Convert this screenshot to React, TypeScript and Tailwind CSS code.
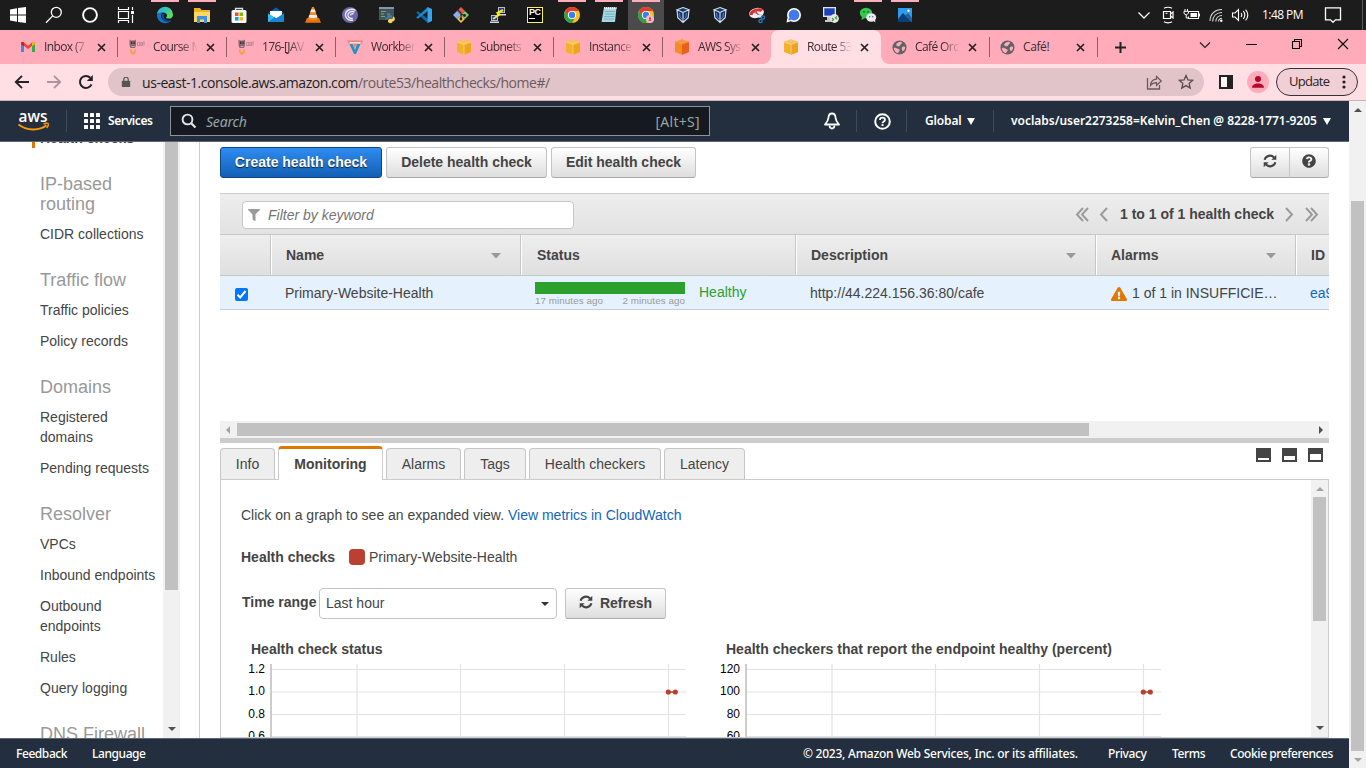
import React from "react";
import { FaFilter, FaQuestionCircle, FaExclamationTriangle } from "react-icons/fa";

type Kids = { children?: React.ReactNode };

const I = ({ children, size = 18, vb = 18 }: Kids & { size?: number; vb?: number }) => (
  <svg width={size} height={size} viewBox={`0 0 ${vb} ${vb}`} fill="none" className="block shrink-0">
    {children}
  </svg>
);

/* ---------- taskbar icons ---------- */

const Windows = () => (
  <I>
    <path d="M1 3.400 8 2.300v6.200H1zM9 2.100 17 1v7.500H9zM1 9.500h7v6.200l-7-1.100zM9 9.500h8V17l-8-1.100z" fill="#fff" />
  </I>
);
const SearchThin = () => (
  <I>
    <circle cx="11.300" cy="6.300" r="5" stroke="#fff" strokeWidth="1.300" />
    <path d="M7.700 9.900 1 16.800" stroke="#fff" strokeWidth="1.300" />
  </I>
);
const Ring = () => (
  <I>
    <circle cx="9" cy="9" r="6.900" stroke="#fff" strokeWidth="1.900" />
  </I>
);
const TaskView = () => (
  <I>
    <path d="M1.500 1v2.500h10V1M1.500 17v-2.500h10V17M1.500 5.500h10v7h-10zM15.500 1v3M15.500 9v8" stroke="#fff" strokeWidth="1.200" />
    <path d="M14 5h3v3h-3z" fill="#fff" />
  </I>
);
const Edge = () => (
  <I>
    <defs>
      <linearGradient id="eg" x1="0" y1="0" x2="1" y2="0.500">
        <stop offset="0" stopColor="#2fa6e6" />
        <stop offset="0.600" stopColor="#35c7b5" />
        <stop offset="1" stopColor="#63dd5b" />
      </linearGradient>
    </defs>
    <path d="M1 9a8 8 0 0 1 16-.6c0 3-2.300 4.200-4.600 4.200-1.500 0-2.300-.4-2.300-1 0-.5.900-.8.900-2.200 0-1.600-1.500-3-4-3C4.500 6.400 1.700 7.200 1 9z" fill="url(#eg)" />
    <path d="M1 9c.8-1.900 3.400-2.700 5.600-2.500C4.600 8 4.600 11 6 13c2 2.700 6 3.400 9.600 1C14.200 16 12 17.200 9.200 17.200 4.500 17.200.8 13.500 1 9z" fill="#1473c8" />
    <path d="M6.500 8c-2 3 0 7.500 4.300 8.200 2 .3 3.800-.7 4.800-2.200-2.200 1-5.600.6-7-1.400-1-1.400-1.200-3 .1-4.200-.6-.4-1.500-.6-2.200-.4z" fill="#0d4b96" />
  </I>
);
const Folder = () => (
  <I>
    <path d="M1 2h6l1.500 2H17v12H1z" fill="#f0b429" />
    <path d="M1 6h16v10H1z" fill="#ffd766" />
    <path d="M4 10h10v7h-3v-3.500H7V17H4z" fill="#3c93dd" />
  </I>
);
const Store = () => (
  <I>
    <path d="M5.500 5V2.500h7V5" stroke="#d8dfe6" strokeWidth="1.300" />
    <rect x="1.500" y="4" width="15" height="13" rx="1.500" fill="#f5f6f8" />
    <path d="M5 6.500h3.500V10H5z" fill="#f25022" />
    <path d="M9.500 6.500H13V10H9.500z" fill="#7fba00" />
    <path d="M5 11h3.500v3.500H5z" fill="#00a4ef" />
    <path d="M9.500 11H13v3.500H9.500z" fill="#ffb900" />
  </I>
);
const Mail = () => (
  <I>
    <path d="M1 7 9 1.500 17 7z" fill="#0a5fb4" />
    <path d="M3 5h12v5l-6 3-6-3z" fill="#fff" />
    <path d="M1 7.500V16h16V7.500l-8 5z" fill="#2aa7ea" />
    <path d="M1 16l6.500-5.500L9 12.500l8-5V16z" fill="#1685d6" />
    <path d="M1 7.500V16l6.500-4.600z" fill="#39b6f3" />
  </I>
);
const Vlc = () => (
  <I>
    <path d="M3 12h12l2 4.800H1z" fill="#e8740c" />
    <path d="M8 1h2l4 12c-2 1.500-8 1.500-10 0z" fill="#f58a1f" />
    <path d="M7.200 3.600h3.600l.9 2.700H6.300zM5.400 9h7.200l.8 2.300c-2 1-6.800 1-8.800 0z" fill="#e9edf0" />
  </I>
);
const BitTorrent = () => (
  <I>
    <circle cx="9" cy="9" r="8" fill="#6e66a8" />
    <path d="M14.500 4.500C10 1.500 4 4.500 4.500 9.500c.4 3.500 4 5.500 7.500 4.500M13.500 6C10 4.500 6.500 6.500 7 9.700c.4 2.100 2.600 3.100 4.600 2.500M12.500 8c-1.600-.6-3 .2-3 1.500" stroke="#eceaf6" strokeWidth="1.400" />
  </I>
);
const PyScript = () => (
  <I>
    <path d="M1 1h15v13H1z" fill="#45525e" />
    <path d="M1 1h15v2H1z" fill="#7d97ad" />
    <path d="M3 5.500h5M3 8h3M9 8h3M3 10.500h4" stroke="#59b765" strokeWidth="1.200" />
    <path d="M9 11c0-3 5-3 5-.5v2H10c-1.500 0-2 1-2 2C6.500 13.500 7 11.500 9 11z" fill="#3c78aa" />
    <path d="M15 10.500c2.500 0 2.500 5-.5 5 0 2.500-5 2-4.500-.5 0-1.500 1-2 2-2h2.500z" fill="#f8d549" />
  </I>
);
const VsCode = () => (
  <I>
    <path d="M12.500 17 1.200 6.400l1.600-1.200L13 13z" fill="#0b68ab" />
    <path d="M13 1 1.200 11.600l1.600 1.200L13 5z" fill="#1b87cf" />
    <path d="M12.500 1 17 3v12l-4.500 2z" fill="#35a6ee" />
  </I>
);
const GitIcon = () => (
  <I>
    <path d="M9 1l4 4-4 4-4-4z" fill="#e9594b" />
    <path d="M5 5l4 4-4 4-4-4z" fill="#8ab0ee" />
    <path d="M13 5l4 4-4 4-4-4z" fill="#7cc576" />
    <path d="M9 9l4 4-4 4-4-4z" fill="#f0c24b" />
    <path d="M6 4l3 3v6M9 8l3 1.500" stroke="#2b2b2b" strokeWidth="1.200" />
    <circle cx="12.500" cy="9.500" r="1.400" fill="#222" />
    <circle cx="9" cy="13" r="1.400" fill="#222" />
  </I>
);
const Putty = () => (
  <I>
    <path d="M9 1h7v6H9zM2 9h7v6H2z" fill="#b8bdc4" />
    <path d="M10 2h5v4h-5zM3 10h5v4H3z" fill="#2136a8" />
    <path d="M8 8h9v1.500H8zM1 15.500h9V17H1z" fill="#d5d8dc" />
    <path d="M14 4 8.500 7l2 1.500L4 13" stroke="#f5ec1c" strokeWidth="2" />
  </I>
);
const PyCharm = () => (
  <span className="flex h-4 w-4 flex-col border border-[#f4f35a] bg-black pl-[1px] font-['Liberation_Sans'] text-[9px] leading-[9px] font-bold tracking-[-0.500px] text-white">
    PC
    <span className="mt-[1px] block h-px w-[6px] bg-white" />
  </span>
);
const Chrome = ({ badge = false }: { badge?: boolean }) => (
  <I>
    <circle cx="9" cy="9" r="8" fill="#fbc116" />
    <path d="M2.070 5A8 8 0 0 1 15.930 5H9a4 4 0 0 0-3.500 6z" fill="#e33b2e" />
    <path d="M2.070 5A8 8 0 0 0 9 17l3.500-6a4 4 0 0 1-7 0z" fill="#2da14c" />
    <circle cx="9" cy="9" r="4.100" fill="#fff" />
    <circle cx="9" cy="9" r="3.200" fill="#3b7ded" />
    {badge && (
      <>
        <circle cx="13" cy="13" r="4" fill="#f9b9c2" />
        <circle cx="13" cy="12.200" r="1" fill="#c2234a" />
        <path d="M11.500 14.800c0-1.700 3-1.700 3 0z" fill="#c2234a" />
      </>
    )}
  </I>
);
const Notepad = () => (
  <I>
    <path d="M4 1.500h12.500L15 16H1.500z" fill="#a9d6e3" />
    <path d="M5 5.500h10M4.700 8h10M4.300 10.500h10M4 13h10" stroke="#6aa6b8" strokeWidth="0.800" />
    <path d="M4 2h12.500" stroke="#e9eef0" strokeWidth="2" strokeDasharray="1.200 0.800" />
  </I>
);
const VBox = () => (
  <I>
    <path d="M9 1l6.500 2.500-.8 8.500L9 17l-5.700-5L2.500 3.500z" fill="#17366a" />
    <path d="M9 1.500l6 2.200L9 6.500 3 3.700zM9 6.500v10M3 3.700l.8 8L9 16.500l5.200-4.800.8-8" stroke="#d5e0ee" strokeWidth="1.100" />
    <path d="M5.500 7l.5 4 3 3M12.500 7l-.5 4-3 3" stroke="#5f7fae" strokeWidth="1" />
  </I>
);
const Snip = () => (
  <I>
    <ellipse cx="8.500" cy="7" rx="7.500" ry="5" transform="rotate(-14 8.500 7)" fill="#eceef1" />
    <path d="M1.500 9C.5 4 11 0 15.500 3.500l-3 2.500C9 4 5.500 6 4.500 9z" fill="#d8332f" />
    <path d="M6 6l6 3M8 5l1.500 3.500" stroke="#b33" strokeWidth="0.900" />
    <path d="M11 9.500l3.500-1.500M12 8v4" stroke="#d8dde2" strokeWidth="1.300" />
    <circle cx="15" cy="11.500" r="1.600" stroke="#2878c7" strokeWidth="1.400" />
    <circle cx="12.500" cy="15" r="1.600" stroke="#2878c7" strokeWidth="1.400" />
  </I>
);
const Signal = () => (
  <I>
    <circle cx="9" cy="9" r="7" fill="#fff" />
    <path d="M1.500 16.500 2.300 12l3.500 3.300z" fill="#fff" />
    <circle cx="9" cy="9" r="5.400" fill="#4478f0" />
    <path d="M3.500 14.500 4 11.500l2.500 2z" fill="#4478f0" />
  </I>
);
const Remote = () => (
  <I>
    <path d="M1 1h13v10H1z" fill="#dfe3e8" />
    <path d="M2.300 2.300h10.400v7.300H2.300z" fill="#1d42b8" />
    <path d="M5 11h5v3H5zM3 14h8v2H3z" fill="#c3c8ce" />
    <circle cx="12.500" cy="12.500" r="4.400" fill="#e6e8ea" />
    <path d="M10 12l1.600 1.500-1.600 1.500M15 10.300l-1.600 1.500 1.600 1.500" stroke="#4aa038" strokeWidth="1.200" />
  </I>
);
const Wechat = () => (
  <I>
    <ellipse cx="7" cy="7" rx="6.200" ry="5.200" fill="#36c74e" />
    <path d="M3 10.500 2.500 14 6 12z" fill="#36c74e" />
    <circle cx="5" cy="5.800" r="0.900" fill="#14662a" />
    <circle cx="9" cy="5.800" r="0.900" fill="#14662a" />
    <ellipse cx="12.200" cy="11.500" rx="5" ry="4.200" fill="#e9ecee" />
    <path d="M14 14.500l2.300 2-.2-3z" fill="#e9ecee" />
    <circle cx="10.700" cy="10.700" r="0.700" fill="#666" />
    <circle cx="13.800" cy="10.700" r="0.700" fill="#666" />
  </I>
);
const Photos = () => (
  <I>
    <path d="M2 2h14v14H2z" fill="#2f9bea" />
    <path d="M2 13l5-6 9 9H2z" fill="#0c3f78" />
    <path d="M9 10l3-3 4 5v4z" fill="#1d62ab" />
    <circle cx="12.500" cy="4.800" r="1.200" fill="#fff" />
  </I>
);

const apps: { icon: React.ReactNode; open?: boolean; active?: boolean }[] = [
  { icon: <Edge />, open: true },
  { icon: <Folder />, open: true },
  { icon: <Store /> },
  { icon: <Mail /> },
  { icon: <Vlc /> },
  { icon: <BitTorrent /> },
  { icon: <PyScript /> },
  { icon: <VsCode /> },
  { icon: <GitIcon /> },
  { icon: <Putty /> },
  { icon: <PyCharm /> },
  { icon: <Chrome />, open: true },
  { icon: <Notepad />, open: true },
  { icon: <Chrome badge />, open: true, active: true },
  { icon: <VBox /> },
  { icon: <VBox /> },
  { icon: <Snip /> },
  { icon: <Signal /> },
  { icon: <Remote /> },
  { icon: <Wechat />, open: true },
  { icon: <Photos />, open: true },
];

function Taskbar() {
  return (
    <div className="flex h-[30px] shrink-0 bg-[#1c1c1c]">
      <div className="flex w-[147px]">
        {[<Windows />, <SearchThin />, <Ring />, <TaskView />].map((icon, i) => (
          <div key={i} className="flex w-9 items-center justify-center">{icon}</div>
        ))}
      </div>
      {apps.map((a, i) => (
        <div key={i} className={a.active ? "mr-px flex w-9 flex-col items-center bg-[#4b4b4b]" : "mr-px flex w-9 flex-col items-center"}>
          <div className={a.open ? "h-[2px] w-7 bg-[#ffaebb]" : "h-[2px] w-7"} />
          <div className="flex h-[26px] items-center">{a.icon}</div>
        </div>
      ))}
      <div className="ml-auto flex items-center">
        <I>
          <path d="M3.500 6.500 9 12l5.500-5.500" stroke="#fff" strokeWidth="1.300" />
        </I>
        <span className="ml-[6px]">
          <I>
            <path d="M5 2.200c2-1.300 6-1.300 8 0M5 15.800c2 1.300 6 1.300 8 0M4.500 5.500h7v7h-7zM11.500 8l2.500-2v6l-2.500-2" stroke="#fff" strokeWidth="1.200" />
            <path d="M6.500 7.300h2" stroke="#fff" />
          </I>
        </span>
        <span className="ml-[6px]">
          <I>
            <path d="M6 5.500h9.500v7H5.500v-2" stroke="#fff" strokeWidth="1.100" />
            <path d="M7.500 7h6.500v4H7.500zM16 7.500h1v3h-1z" fill="#fff" />
            <path d="M2 3v2M4.500 3v2M1 5.300h4.500v2L3.200 9 1 7.500zM3.200 9v3h2.500" stroke="#fff" />
          </I>
        </span>
        <span className="ml-[7px]">
          <I>
            <path d="M2 15C2 8 7 3.500 14 3.500M4.700 15.500C5 10 8.500 6.500 14 6.500M7.800 15.500c.2-3.500 2.700-6 6.200-6M10.500 15.500c.2-1.800 1.500-3.200 3.500-3.200" stroke="#ddd" strokeWidth="1.100" />
            <circle cx="13.300" cy="14.800" r="1.200" fill="#fff" />
          </I>
        </span>
        <span className="ml-[5px]">
          <I>
            <path d="M1.500 7h2.500l3.500-3.500v11L4 11H1.500zM10 7c1 1.200 1 2.800 0 4M12.300 5.200c1.900 2.300 1.900 5.300 0 7.600M14.600 3.600c2.700 3.300 2.700 7.500 0 10.800" stroke="#fff" strokeWidth="1.100" />
          </I>
        </span>
        <span className="ml-[13px] w-[50px] font-['Open_Sans',sans-serif] text-[12px] tracking-[-0.550px] whitespace-nowrap text-white">1:48 PM</span>
        <span className="ml-[12px]">
          <I>
            <path d="M1.500 1.800h15v12h-5L9 16.300l-2.500-2.500h-5z" stroke="#fff" strokeWidth="1.300" />
          </I>
        </span>
        <span className="mr-[3px] ml-[20px] h-[30px] w-px bg-[#5a5a5a]" />
      </div>
    </div>
  );
}

/* ---------- browser tabs ---------- */

const Gmail = () => (
  <I size={14} vb={14}>
    <path d="M0 3v9h3V6z" fill="#4285f4" />
    <path d="M14 3v9h-3V6z" fill="#34a853" />
    <path d="M0 3.500C0 1.800 1.800 1.500 3 2.500l4 3.200 4-3.200c1.200-1 3-.7 3 1L7 9z" fill="#ea4335" />
    <path d="M11 2.500c1.200-1 3-.7 3 1V4l-3 2.500z" fill="#fbbc04" />
    <path d="M3 2.500C1.800 1.500 0 1.800 0 3.500V4l3 2.500z" fill="#c5221f" />
  </I>
);
const Canvas = () => (
  <I size={16} vb={16}>
    <path d="M.5.500l1.500 1h3.500l1.500-1v5.500l-1 3h-4.500l-1-3z" fill="#8a6673" />
    <path d="M2 2.500h1.300V5H2zM4.500 2.500h1.300V5H4.500z" fill="#3d3440" />
    <path d="M2.500 7.500h3" stroke="#d9a0ac" />
    <path d="M8.500 3.500h2.200v3H8.500zM12 3.500h1.500v3H12zM15 2v4.500" stroke="#c08c99" strokeWidth="1.100" />
    <path d="M1 10.300h1.600v2l1.400 1 1.600-1v-2H7c.5 3-.7 4.700-3 5.700-2.200-1-3.500-2.700-3-5.700z" fill="#f5a044" />
  </I>
);
const Vocareum = () => (
  <I size={16} vb={16}>
    <path d="M0 1.500h16l-1.500 3h-4.500L7.500 9 6 4.500H1.500z" fill="#e9826f" />
    <path d="M2 3h12l-1 1.500H3z" fill="#f3e7ea" />
    <path d="M2.500 5h3L8 11l2-6h3.500L9 15H7z" fill="#1e93c6" />
  </I>
);
const Cube = ({ dark = false }: { dark?: boolean }) => (
  <I size={16} vb={16}>
    <path d="M8 0.500 15 3v10l-7 2.700L1 13V3z" fill={dark ? "#f58b27" : "#f3b02f"} />
    <path d="M1 3l7 2.500L15 3 8 .5z" fill={dark ? "#f79a3e" : "#f7c35c"} />
    <path d="M8 5.500V15.700L15 13V3z" fill={dark ? "#e8611c" : "#eda51d"} />
    {!dark && <path d="M1 3l7 2.500L15 3M8 5.500V15.700" stroke="#fbd98f" strokeWidth="0.700" />}
  </I>
);
const Globe = () => (
  <I size={15} vb={16}>
    <circle cx="8" cy="8" r="7.500" fill="#5f6368" />
    <path d="M2 8.500c2-.5 3 .5 4.500 1 1.500.3 2 1 1.500 2.200-.5 1-1.500 1.300-1.500 2.500C3.500 13.500 2 11 2 8.500zM6 3c2-.8 3-1.200 4-1 1 .8.500 2-.5 2.500C8.500 5 9 6 8 6.500 6.500 7 5 6.500 4.500 5.500 4.500 4.500 5 3.500 6 3zM11 7.500c1.500-1 3-.5 3 1-.3 1.800-1.300 3-2.500 3.500-.8-1-2-3.500-.5-4.500z" fill="#ffabb9" />
  </I>
);
const CloseX = () => (
  <I size={9} vb={9}>
    <path d="M1 1l7 7M8 1 1 8" stroke="#222" strokeWidth="1.700" />
  </I>
);

const tabs: { icon: React.ReactNode; label: string; active?: boolean; line?: boolean; whole?: boolean }[] = [
  { icon: <Gmail />, label: "Inbox (7", line: true },
  { icon: <Canvas />, label: "Course M", line: true },
  { icon: <Canvas />, label: "176-[JAV", line: true },
  { icon: <Vocareum />, label: "Workber", line: true },
  { icon: <Cube />, label: "Subnets", line: true },
  { icon: <Cube />, label: "Instance", line: true },
  { icon: <Cube dark />, label: "AWS Sys" },
  { icon: <Cube />, label: "Route 53", active: true },
  { icon: <Globe />, label: "Café Orc", line: true },
  { icon: <Globe />, label: "Café!", line: true, whole: true },
];

function TabStrip() {
  return (
    <div className="flex h-[34px] shrink-0 bg-[#ffabb9] font-['Open_Sans',sans-serif]">
      <div className="flex pl-[9px]">
        {tabs.map((t, i) => (
          <div
            key={i}
            className={
              t.active
                ? "relative -ml-px flex w-[110px] items-center rounded-t-[8px] bg-[#ffdfe4] pl-[12px]"
                : i > 7
                  ? "-mr-px flex w-[109px] items-center pl-[10px]"
                  : "flex w-[109px] items-center pl-[11px]"
            }
          >
            {t.active && (
              <>
                <span className="absolute bottom-0 -left-2 h-2 w-2 bg-[radial-gradient(circle_at_0_0,transparent_7.500px,#ffdfe4_8px)]" />
                <span className="absolute -right-2 bottom-0 h-2 w-2 bg-[radial-gradient(circle_at_100%_0,transparent_7.500px,#ffdfe4_8px)]" />
              </>
            )}
            <span className="flex w-4 justify-center">{t.icon}</span>
            <span
              className={
                t.whole
                  ? "ml-2 w-[45px] text-[12px] tracking-[-0.400px] whitespace-nowrap text-[#3b2b33]"
                  : "ml-2 w-[45px] text-[12px] tracking-[-0.600px] whitespace-nowrap text-[#3b2b33] [mask-image:linear-gradient(90deg,#000_62%,transparent)]"
              }
            >
              {t.label}
            </span>
            <span className="ml-[8px]">
              <CloseX />
            </span>
            <span className={t.line ? "ml-auto h-5 w-px bg-[#8c6069]" : "ml-auto"} />
          </div>
        ))}
      </div>
      <div className="ml-[17px] flex items-center">
        <I size={13} vb={13}>
          <path d="M6.500 1v11M1 6.500h11" stroke="#222" strokeWidth="2" />
        </I>
      </div>
      <div className="ml-auto flex items-start pt-[8px] pr-[17px]">
        <span className="mr-[35px] pt-px">
          <I size={12} vb={12}>
            <path d="M1 3.500l5 5 5-5" stroke="#222" strokeWidth="1.200" />
          </I>
        </span>
        <span className="mr-[34px] pt-[6px]">
          <span className="block h-px w-[11px] bg-black" />
        </span>
        <span className="mr-[34px]">
          <I size={12} vb={12}>
            <path d="M1.500 3.500h7v7h-7zM3.500 3.500v-2h7v7h-2" stroke="#000" strokeWidth="1.100" />
          </I>
        </span>
        <I size={12} vb={12}>
          <path d="M1 1l10 10M11 1 1 11" stroke="#000" strokeWidth="1.100" />
        </I>
      </div>
    </div>
  );
}

function AddressBar() {
  return (
    <div className="flex h-[37px] shrink-0 items-center border-b border-[#c9b3b8] bg-[#ffdfe4] pl-[14px] font-['Open_Sans',sans-serif]">
      <I size={16} vb={16}>
        <path d="M15 8H2M8 1.800 1.800 8 8 14.200" stroke="#222" strokeWidth="1.900" />
      </I>
      <span className="ml-[16px]">
        <I size={16} vb={16}>
          <path d="M1 8h13M8 1.800 14.200 8 8 14.200" stroke="#aa979b" strokeWidth="1.900" />
        </I>
      </span>
      <span className="ml-[16px]">
        <I size={16} vb={16}>
          <path d="M13.500 10.300A6 6 0 1 1 12.300 3.800" stroke="#222" strokeWidth="2" />
          <path d="M14.800 1v6h-6z" fill="#222" />
        </I>
      </span>
      <div className="ml-[14px] flex h-[28px] w-[1096px] items-center rounded-full bg-[#e1c4c9] pl-[13px]">
        <I size={10} vb={12}>
          <rect x="1" y="4.500" width="10" height="7.500" rx="1" fill="#555" />
          <path d="M3.300 5V3a2.700 2.700 0 0 1 5.400 0v2" stroke="#555" strokeWidth="1.400" />
        </I>
        <span className="ml-[11px] text-[14px] tracking-[-0.440px] whitespace-nowrap text-[#6b5a5e]">
          <span className="text-[#231f20]">us-east-1.console.aws.amazon.com</span>/route53/healthchecks/home#/
        </span>
        <span className="mr-[15px] ml-auto">
          <I size={18} vb={18}>
            <path d="M2.500 5v11h12v-4" stroke="#6a5a5e" strokeWidth="1.300" />
            <path d="M5.500 12.500c.3-4 2.700-6.200 6-6.400V3.500L16.300 8l-4.800 4.300V9.700c-2.700-.1-4.500.8-6 2.800z" stroke="#6a5a5e" strokeWidth="1.200" />
          </I>
        </span>
        <span className="mr-[10px]">
          <I size={16} vb={16}>
            <path d="M8 1.500l1.900 4.400 4.800.4-3.600 3.100 1.100 4.700L8 11.600l-4.200 2.500 1.100-4.700L1.300 6.300l4.800-.4z" stroke="#5a4b4f" strokeWidth="1.300" />
          </I>
        </span>
      </div>
      <span className="ml-[15px] flex h-[14px] w-[14px] justify-end border-2 border-[#222] bg-[#fff3f5]">
        <span className="h-full w-[4px] bg-[#222]" />
      </span>
      <span className="ml-[14px]">
        <I size={22} vb={22}>
          <circle cx="11" cy="11" r="11" fill="#ffabb9" />
          <circle cx="11" cy="8" r="3" fill="#b5062a" />
          <path d="M5 16.800c0-5.600 12-5.600 12 0z" fill="#b5062a" />
        </I>
      </span>
      <div className="ml-[7px] flex h-[28px] w-[82px] items-center rounded-full border border-[#3a2f33] bg-[#f0d0d6] pl-[12px] text-[13px] tracking-[-0.700px] text-[#2b2225]">
        Update
        <span className="mr-[11px] ml-auto">
          <svg width="4" height="14" viewBox="0 0 4 14" className="block" fill="#222">
            <circle cx="2" cy="2" r="1.600" />
            <circle cx="2" cy="7" r="1.600" />
            <circle cx="2" cy="12" r="1.600" />
          </svg>
        </span>
      </div>
    </div>
  );
}

/* ---------- AWS console ---------- */

const Divider = () => <span className="block h-[22px] w-px bg-[#3f4a58]" />;
const CaretWhite = () => (
  <svg width="8" height="7" viewBox="0 0 8 7" className="block" fill="#fff">
    <path d="M0 0h8L4 7z" />
  </svg>
);

function ConsoleNav() {
  return (
    <div className="flex h-[41px] shrink-0 items-center border-b border-[#5d6672] bg-[#232f3e] font-['Noto_Sans',sans-serif] text-[12px] font-semibold whitespace-nowrap text-white">
      <div className="flex w-[66px] flex-col pl-[18px]">
        <svg width="32" height="22" viewBox="0 0 32 22" className="block" fill="none">
          <text x="0.500" y="11.500" fontFamily="Open Sans" fontSize="16" fontWeight="600" fill="#fff" textLength="29" lengthAdjust="spacingAndGlyphs">aws</text>
          <path d="M.5 14.500c8 6.500 21 6.500 28 .8" stroke="#f90" strokeWidth="1.900" />
          <path d="M25.500 14c2-1 4.500-1 4.800-.3.300.9-.6 3-1.600 4.300" stroke="#f90" strokeWidth="1.400" />
        </svg>
      </div>
      <Divider />
      <span className="ml-[17px]">
        <svg width="16" height="16" viewBox="0 0 16 16" fill="#fff" className="block">
          {[0, 6, 12].map((y) => [0, 6, 12].map((x) => <rect key={`${x}-${y}`} x={x} y={y} width="4" height="4" rx="0.500" />))}
        </svg>
      </span>
      <span className="ml-2 w-[45px] tracking-[-0.400px]">Services</span>
      <div className="ml-[17px] flex h-[30px] w-[540px] items-center border border-[#879596] bg-[#16191f] pr-[9px] pl-[10px] text-[14px] font-normal text-[#95a5a6]">
        <I size={16} vb={16}>
          <circle cx="6.500" cy="6.500" r="4.900" stroke="#e3e6e8" strokeWidth="1.900" />
          <path d="M10 10l4.500 4.500" stroke="#e3e6e8" strokeWidth="2.200" />
        </I>
        <span className="ml-[9px] italic tracking-[-0.200px]">Search</span>
        <span className="ml-auto tracking-[0.300px]">[Alt+S]</span>
      </div>
      <span className="ml-[113px]">
        <I size={18} vb={18}>
          <path d="M9 1.500c2.500 0 3.500 2 3.600 4.500.2 3 1.300 4.200 3.400 6.500H2c2.100-2.300 3.200-3.500 3.400-6.500C5.500 3.500 6.500 1.500 9 1.500z" stroke="#fff" strokeWidth="1.800" strokeLinejoin="round" />
          <path d="M6.500 13.500c.3 4 4.700 4 5 0" stroke="#fff" strokeWidth="1.800" />
        </I>
      </span>
      <span className="ml-[15px]"><Divider /></span>
      <span className="ml-[17px]">
        <I size={17} vb={17}>
          <circle cx="8.500" cy="8.500" r="7.300" stroke="#fff" strokeWidth="2" />
          <path d="M6 6.900C6 3.900 11 3.900 11 6.900c0 1.600-2.500 1.600-2.500 3.300" stroke="#fff" strokeWidth="1.800" />
          <path d="M7.500 11.200h2V13h-2z" fill="#fff" />
        </I>
      </span>
      <span className="ml-[15px]"><Divider /></span>
      <span className="ml-[18px] w-[42px] tracking-[-0.150px]">Global</span>
      <CaretWhite />
      <span className="ml-[18px]"><Divider /></span>
      <span className="ml-[17px] w-[312px] tracking-[-0.030px]">voclabs/user2273258=Kelvin_Chen @ 8228-1771-9205</span>
      <span className="mr-[18px] ml-auto"><CaretWhite /></span>
    </div>
  );
}

const groups: { title: string; items: string[] }[] = [
  { title: "IP-based routing", items: ["CIDR collections"] },
  { title: "Traffic flow", items: ["Traffic policies", "Policy records"] },
  { title: "Domains", items: ["Registered domains", "Pending requests"] },
  { title: "Resolver", items: ["VPCs", "Inbound endpoints", "Outbound endpoints", "Rules", "Query logging"] },
  { title: "DNS Firewall", items: [] },
];

const Tri = ({ dir, color = "#505050" }: { dir: "up" | "down" | "left" | "right"; color?: string }) => (
  <svg width="8" height="8" viewBox="0 0 8 8" className="block" fill={color}>
    <path d={{ up: "M0 6l4-4 4 4z", down: "M0 2l4 4 4-4z", left: "M6 0L2 4l4 4z", right: "M2 0l4 4-4 4z" }[dir]} />
  </svg>
);

function Sidebar() {
  return (
    <div className="flex h-full w-[200px] shrink-0 border-r border-[#ccc] pr-[19px]">
      <div className="flex h-full w-[163px] flex-col justify-start overflow-hidden text-[14px] leading-5 text-[#444]">
        <div className="-mt-[14px] flex h-5 shrink-0">
          <span className="ml-8 w-[3px] bg-[#e07700]" />
          <span className="ml-[5px] font-bold">Health checks</span>
        </div>
        {groups.map((g) => (
          <div key={g.title} className="mt-[26px] flex shrink-0 flex-col gap-[11px] pl-10">
            <div className="-mb-px w-[110px] text-[18px] text-[#999]">{g.title}</div>
            {g.items.map((it) => (
              <div key={it} className={it.startsWith("Reg") || it.startsWith("Out") ? "w-[80px]" : "whitespace-nowrap"}>
                {it}
              </div>
            ))}
          </div>
        ))}
      </div>
      <div className="flex w-[17px] shrink-0 flex-col items-center bg-[#f1f1f1]">
        <div className="h-[448px] w-[13px] bg-[#c1c1c1]" />
        <div className="mt-auto pb-[5px]"><Tri dir="down" /></div>
      </div>
    </div>
  );
}

const grayBtn =
  "flex h-[31px] items-center justify-center rounded-[3px] border border-[#c4c4c4] border-b-[#aaa] bg-gradient-to-b from-white to-[#dedede] text-[14px] font-bold text-[#444]";

const RefreshIcon = () => (
  <svg width="14" height="14" viewBox="0 0 14 14" fill="none" className="-mt-[3px] block">
    <path d="M1.600 5.800A5.600 5.600 0 0 1 11 3.400M12.400 8.200A5.600 5.600 0 0 1 3 10.600" stroke="#444" strokeWidth="2.100" />
    <path d="M13.300.8v4.900H8.400zM.7 13.200V8.300h4.900z" fill="#444" />
  </svg>
);

const Chevrons = ({ n, right = false }: { n: number; right?: boolean }) => (
  <svg width={n === 2 ? 14 : 9} height="15" viewBox={n === 2 ? "0 0 14 15" : "0 0 9 15"} fill="none" stroke="#999" strokeWidth="1.900" className={right ? "block -scale-x-100" : "block"}>
    <path d="M8 1 2 7.500 8 14" />
    {n === 2 && <path d="M13 1 7 7.500 13 14" />}
  </svg>
);

const SortCaret = () => (
  <svg width="10" height="6" viewBox="0 0 10 6" fill="#999" className="mt-[2px] mr-[19px] ml-auto block shrink-0">
    <path d="M0 0h10L5 5.500z" />
  </svg>
);

const Head = ({ label, className, caret = false }: { label: string; className: string; caret?: boolean }) => (
  <div className={`flex shrink-0 items-center border-r border-r-[#c6c6c6] border-l border-l-white pl-[14px] ${className}`}>
    {label}
    {caret && <SortCaret />}
  </div>
);

function Table() {
  return (
    <div className="mt-[15px] h-[228px] overflow-hidden text-[14px] text-[#444]">
      <div className="flex h-[41px] items-center border-t border-[#ccc] bg-gradient-to-b from-[#eee] to-[#e2e2e2] pl-[22px]">
        <div className="mt-[2px] flex h-[28px] w-[332px] items-center rounded-[4px] border border-[#c6c6c6] bg-white pl-[5px] text-[#757575] italic">
          <FaFilter size={12} color="#999" />
          <span className="ml-2">Filter by keyword</span>
        </div>
        <div className="ml-auto flex items-center pr-[10px] font-bold">
          <Chevrons n={2} />
          <span className="ml-[10px]"><Chevrons n={1} /></span>
          <span className="ml-[12px] w-[157px] whitespace-nowrap">1 to 1 of 1 health check</span>
          <span className="ml-[8px]"><Chevrons n={1} right /></span>
          <span className="ml-[11px]"><Chevrons n={2} right /></span>
        </div>
      </div>
      <div className="flex h-[42px] border-y border-[#c8c8c8] bg-gradient-to-b from-[#eee] to-[#dfdfdf] font-bold">
        <div className="w-[51px] shrink-0 border-r border-[#c6c6c6]" />
        <Head label="Name" caret className="w-[250px]" />
        <Head label="Status" className="w-[275px] indent-px" />
        <Head label="Description" caret className="w-[300px]" />
        <Head label="Alarms" caret className="w-[200px]" />
        <Head label="ID" className="w-[100px]" />
      </div>
      <div className="flex h-[34px] items-center overflow-hidden border-b border-[#c6cbd0] bg-[#e5f1fd] pt-[2px]">
        <div className="flex w-[65px] shrink-0 pt-[2px] pl-[15px]">
          <span className="flex h-[13px] w-[13px] items-center justify-center rounded-[2px] bg-[#0075ff]">
            <svg width="11" height="11" viewBox="0 0 11 11" fill="none" stroke="#fff" strokeWidth="2">
              <path d="M1.500 5.800 4.200 8.500 9.500 2" />
            </svg>
          </span>
        </div>
        <div className="w-[250px] shrink-0">Primary-Website-Health</div>
        <div className="flex w-[275px] shrink-0">
          <div className="flex w-[150px] flex-col pt-px">
            <div className="h-3 bg-[#2ca02c]" />
            <div className="flex h-[13px] items-center justify-between pt-px text-[9.800px] leading-[12px] tracking-[0.070px] whitespace-nowrap text-[#999]">
              <span>17 minutes ago</span>
              <span>2 minutes ago</span>
            </div>
          </div>
          <span className="ml-[14px] pt-px text-[#2ca02c]">Healthy</span>
        </div>
        <div className="w-[301px] shrink-0">http://44.224.156.36:80/cafe</div>
        <div className="flex w-[199px] shrink-0 items-center whitespace-nowrap">
          <FaExclamationTriangle size={16} color="#e07700" />
          <span className="ml-[5px]">1 of 1 in INSUFFICIE…</span>
        </div>
        <div className="text-[#1166bb]">ea9</div>
      </div>
    </div>
  );
}

const detailTabs: { label: string; cls: string }[] = [
  { label: "Info", cls: "w-[55px]" },
  { label: "Monitoring", cls: "w-[105px]" },
  { label: "Alarms", cls: "w-[75px]" },
  { label: "Tags", cls: "w-[62px]" },
  { label: "Health checkers", cls: "w-[132px]" },
  { label: "Latency", cls: "w-[81px]" },
];

const WinIcon = ({ y }: { y: number }) => (
  <svg width="15" height="14" viewBox="0 0 15 14" className="block">
    <path d="M0 0h15v14H0z" fill="#444" />
    <rect x="2" y={y} width="11" height={12 - y} fill="#fff" />
  </svg>
);

function Chart({ title, labels }: { title: string; labels: string[] }) {
  return (
    <div className="w-[475px]">
      <div className="pl-[30px] leading-5 font-bold">{title}</div>
      <div className="flex pt-[5px]">
        <div className="-mt-[5px] flex w-[45px] shrink-0 flex-col pr-[1px] text-right text-[12px] leading-[20px] text-black">
          {labels.map((l) => (
            <span key={l} className="h-[22.400px]">{l}</span>
          ))}
        </div>
        <svg width="420" height="76" viewBox="0 0 420 76" className="ml-[4px] block" fill="none">
          <path d="M87 0v76M190.500 0v76M294.500 0v76M398.500 0v76M0 5.500h416M0 28h416M0 50.500h416M0 72.500h416" stroke="#e3e3e3" strokeWidth="1.200" />
          <path d="M1 0v76" stroke="#ccc" strokeWidth="2" />
          <path d="M398 28h7" stroke="#ba4032" strokeWidth="1.500" />
          <circle cx="398.300" cy="28" r="2.600" fill="#ba4032" />
          <circle cx="405.300" cy="28" r="2.600" fill="#ba4032" />
        </svg>
      </div>
    </div>
  );
}

function Details() {
  return (
    <>
      <div className="flex h-[36px] shrink-0 items-end pt-[3px]">
        {detailTabs.map((t) =>
          t.label === "Monitoring" ? (
            <div key={t.label} className={`relative z-10 mr-[3px] -mb-px flex h-[34px] items-center justify-center rounded-t-[4px] border-x border-t-[3px] border-x-[#ccc] border-t-[#e07700] bg-white pb-px font-bold ${t.cls}`}>
              {t.label}
            </div>
          ) : (
            <div key={t.label} className={`mr-[3px] flex h-[31px] items-center justify-center rounded-t-[4px] border border-b-0 border-[#c6c6c6] bg-[#eee] ${t.cls}`}>
              {t.label}
            </div>
          ),
        )}
        <div className="mr-[6px] ml-auto flex h-full gap-[11px] pt-[2px]">
          <WinIcon y={10} />
          <WinIcon y={8} />
          <WinIcon y={6} />
        </div>
      </div>
      <div className="flex h-[259px] shrink-0 overflow-hidden border border-[#ccc]">
        <div className="flex h-full w-[1090px] flex-col overflow-hidden">
          <div className="mt-[25px] ml-[20px] shrink-0 leading-5">
            Click on a graph to see an expanded view. <span className="text-[#1166bb]">View metrics in CloudWatch</span>
          </div>
          <div className="mt-[22px] ml-[20px] flex shrink-0 items-center leading-5">
            <span className="w-[108px] font-bold">Health checks</span>
            <span className="mr-[4px] h-4 w-4 rounded-[4px] bg-[#ba4032]" />
            Primary-Website-Health
          </div>
          <div className="mt-[21px] ml-[21px] flex h-[31px] shrink-0 items-center">
            <span className="w-[77px] pb-[2px] font-bold">Time range</span>
            <div className="flex h-[31px] w-[238px] items-center rounded-[4px] border border-[#c4c4c4] bg-white pr-[7px] pl-[6px]">
              Last hour
              <svg width="8" height="4" viewBox="0 0 8 4" fill="#333" className="mt-[1px] ml-auto block">
                <path d="M0 0h8L4 4z" />
              </svg>
            </div>
            <div className={`ml-2 w-[101px] gap-[7px] ${grayBtn}`}>
              <RefreshIcon />
              Refresh
            </div>
          </div>
          <div className="mt-[20px] flex shrink-0">
            <Chart title="Health check status" labels={["1.2", "1.0", "0.8", "0.6"]} />
            <Chart title="Health checkers that report the endpoint healthy (percent)" labels={["120", "100", "80", "60"]} />
          </div>
        </div>
        <div className="flex w-[17px] shrink-0 flex-col items-center bg-[#f1f1f1]">
          <div className="flex h-[17px] items-center"><Tri dir="up" color="#a3a3a3" /></div>
          <div className="h-[124px] w-[13px] bg-[#c1c1c1]" />
          <div className="mt-auto pb-[5px]"><Tri dir="down" /></div>
        </div>
      </div>
    </>
  );
}

function Main() {
  return (
    <div className="flex h-full w-[1149px] flex-col overflow-hidden pt-[5px] pr-5 pl-5 text-[14px] text-[#444]">
      <div className="flex shrink-0 gap-1">
        <div className="flex h-[31px] w-[162px] items-center justify-center rounded-[3px] border border-[#0d478a] bg-gradient-to-b from-[#2f8cf0] to-[#1160b5] font-bold text-white [text-shadow:0_1px_1px_#123]">
          Create health check
        </div>
        <div className={`w-[161px] ${grayBtn}`}>Delete health check</div>
        <div className={`w-[145px] ${grayBtn}`}>Edit health check</div>
        <div className="ml-auto flex">
          <div className={`w-[40px] rounded-r-none ${grayBtn}`}><RefreshIcon /></div>
          <div className={`-ml-px w-[40px] rounded-l-none pb-[3px] ${grayBtn}`}><FaQuestionCircle size={14} /></div>
        </div>
      </div>
      <Table />
      <div className="flex h-[17px] shrink-0 items-center justify-between bg-[#f1f1f1] px-[4px]">
        <Tri dir="left" color="#a3a3a3" />
        <div className="mr-auto ml-[5px] h-[13px] w-[852px] bg-[#c1c1c1]" />
        <Tri dir="right" />
      </div>
      <div className="h-[5px] shrink-0 bg-[#ccc]" />
      <Details />
    </div>
  );
}

function Footer() {
  return (
    <div className="flex h-[30px] shrink-0 items-center border-t border-[#5d6672] bg-[#232f3e] pl-4 font-['Noto_Sans',sans-serif] text-[12px] font-medium whitespace-nowrap text-white">
      <span className="w-[76px] tracking-[-0.420px]">Feedback</span>
      <span className="tracking-[-0.420px]">Language</span>
      <div className="ml-auto flex">
        <span className="w-[305px] tracking-[-0.240px]">© 2023, Amazon Web Services, Inc. or its affiliates.</span>
        <span className="w-[64px] tracking-[-0.350px]">Privacy</span>
        <span className="w-[58px] tracking-[-0.350px]">Terms</span>
        <span className="w-[119px] tracking-[-0.420px]">Cookie preferences</span>
      </div>
    </div>
  );
}

export default function App() {
  return (
    <div className="flex h-[768px] w-[1366px] flex-col overflow-hidden bg-white font-['Liberation_Sans',Arial,sans-serif]">
      <Taskbar />
      <TabStrip />
      <AddressBar />
      <div className="flex h-[667px]">
        <div className="flex w-[1349px] flex-col">
          <ConsoleNav />
          <div className="flex h-[596px] shrink-0">
            <Sidebar />
            <Main />
          </div>
          <Footer />
        </div>
        <div className="flex w-[17px] flex-col items-center bg-[#f1f1f1]">
          <div className="flex h-[17px] items-center"><Tri dir="up" /></div>
          <div className="mt-[83px] h-[550px] w-[13px] bg-[#c1c1c1]" />
          <div className="flex h-[17px] items-center"><Tri dir="down" color="#a3a3a3" /></div>
        </div>
      </div>
    </div>
  );
}
